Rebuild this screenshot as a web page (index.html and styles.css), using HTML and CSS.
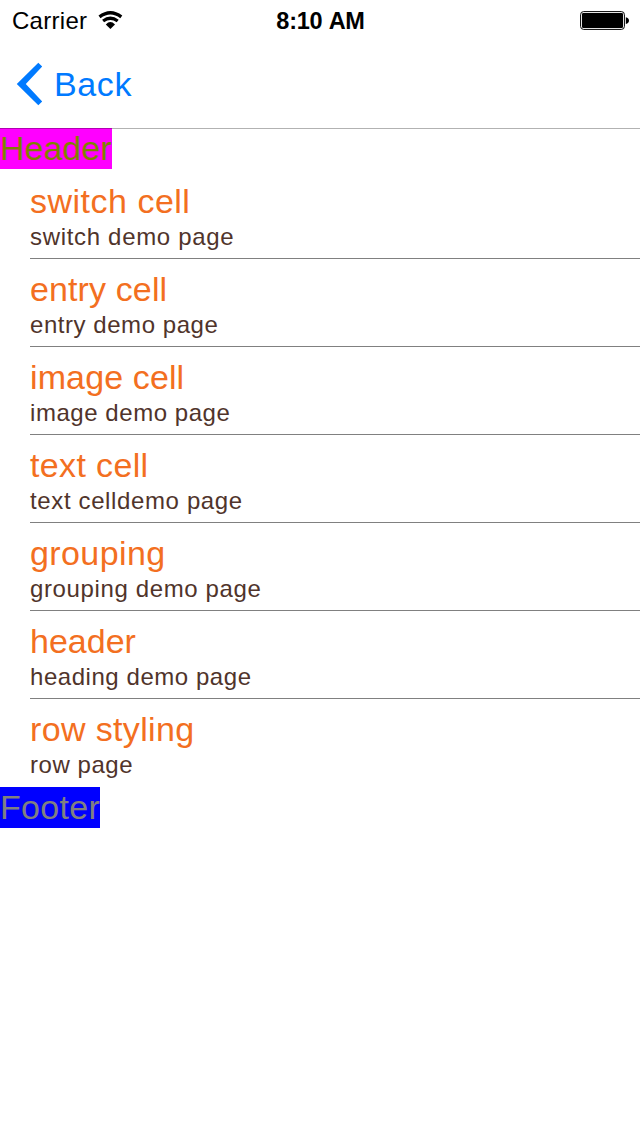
FILE: index.html
```html
<!DOCTYPE html>
<html lang="en">
<head>
<meta charset="utf-8">
<title>Cells</title>
<link rel="stylesheet" href="styles.css">
</head>
<body>
<div class="status">
  <div class="network"><span class="carrier">Carrier</span>
    <svg class="wifi" width="26" height="18" viewBox="0 0 26 18"><g fill="none" stroke="#000" stroke-width="3.3"><path d="M1.5 5.9Q12.4-2.4 23.3 5.9"/><path d="M5.1 10Q12.4 4.6 19.7 10"/></g><path d="M7.8 13.4Q12.4 8.8 17 13.4L12.4 18Z"/></svg>
  </div>
  <span class="time">8:10 AM</span>
  <svg class="battery" width="49" height="20" viewBox="0 0 49 20"><rect x=".6" y=".6" width="43.8" height="17.8" rx="3" fill="none" stroke="#000" stroke-width="1"/><rect x="2" y="2" width="41" height="15" rx="1.2"/><path d="M45.8 6.2Q49 7 49 9.6T45.8 13Z"/></svg>
</div>
<nav class="navbar">
  <svg class="chevron" width="27" height="44" viewBox="0 0 27 44"><path d="M.8 22L22.3 .8L26.2 4.6L9.8 22L26.2 39.4L22.3 43.2Z" fill="#007aff"/></svg>
  <span class="back">Back</span>
</nav>
<main>
  <div class="band header">Header</div>
  <ul class="list">
    <li class="cell"><span class="title">switch cell</span><span class="detail">switch demo page</span></li>
    <li class="cell entry"><span class="title">entry cell</span><span class="detail">entry demo page</span></li>
    <li class="cell image"><span class="title">image cell</span><span class="detail">image demo page</span></li>
    <li class="cell text"><span class="title">text cell</span><span class="detail">text celldemo page</span></li>
    <li class="cell grouping"><span class="title">grouping</span><span class="detail">grouping demo page</span></li>
    <li class="cell heading"><span class="title">header</span><span class="detail">heading demo page</span></li>
    <li class="cell styling"><span class="title">row styling</span><span class="detail">row page</span></li>
  </ul>
  <div class="band footer">Footer</div>
</main>
</body>
</html>
```
FILE: styles.css
```css
* { box-sizing: border-box; }
body { margin: 0; min-height: 1136px; background: #fff; font-family: "Liberation Sans", Arial, sans-serif; font-kerning: none; }
.status { display: grid; grid-template-columns: 1fr auto 1fr; height: 40px; padding: 0 11px 0 12px; font-size: 24px; line-height: 42px; }
.network { display: flex; gap: 11px; }
.carrier { letter-spacing: .28px; }
.wifi { margin-top: 11px; }
.time { font-weight: 700; font-size: 23.5px; letter-spacing: -.25px; }
.battery { justify-self: end; margin-top: 11px; }
.navbar { display: flex; height: 89px; padding: 22px 0 0 16px; border-bottom: 1px solid #b2b2b2; }
.chevron { flex: none; }
.back { margin-left: 11px; font-size: 34px; line-height: 44px; letter-spacing: .6px; color: #007aff; }
.band { width: 112px; height: 41px; font-size: 34px; line-height: 40px; white-space: nowrap; }
.header { height: 40px; line-height: 38px; background: #f0f; box-shadow: 0 -1px #b200b2; color: #808000; }
.footer { width: 100px; background: #00f; color: #808080; letter-spacing: .3px; }
.list { margin: 0; padding: 2px 0 0; list-style: none; }
.cell { display: flex; flex-direction: column; height: 88px; margin-left: 30px; padding-top: 9px; border-bottom: 1px solid #808080; white-space: nowrap; }
.cell:last-child { border-bottom: 0; }
.title { font-size: 34px; line-height: 42px; letter-spacing: .5px; color: #f36f21; }
.detail { margin-top: 1px; font-size: 24px; line-height: 28px; letter-spacing: .55px; color: #50342b; }
.cell:first-child .detail { letter-spacing: .68px; }
.text .detail, .grouping .detail { letter-spacing: .63px; }
.entry .title, .image .title { letter-spacing: .12px; }
.text .title { letter-spacing: .36px; }
.grouping .title { letter-spacing: .4px; }
.heading .title { letter-spacing: 0; }
.styling .title { letter-spacing: .35px; }
```
